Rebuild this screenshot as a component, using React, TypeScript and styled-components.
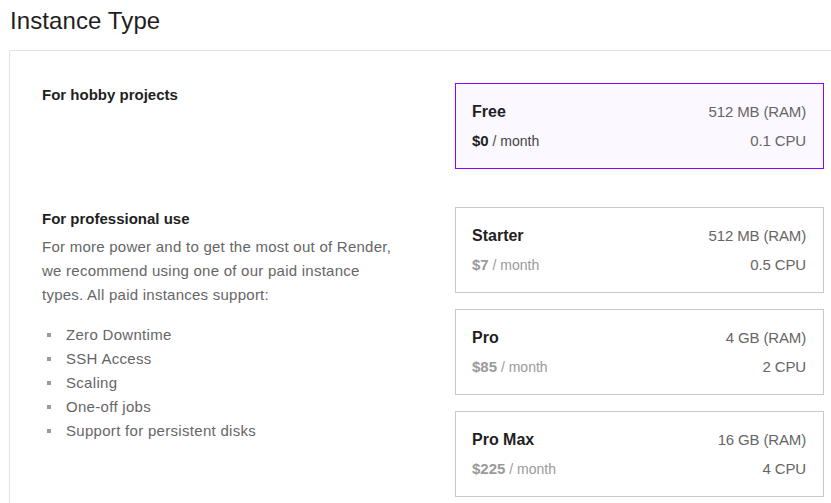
import React from "react";
import styled, { createGlobalStyle } from "styled-components";

const GlobalStyle = createGlobalStyle`
  html, body {
    margin: 0;
    padding: 0;
    background: #ffffff;
    overflow: hidden;
  }
  body {
    font-family: "Liberation Sans", Arial, sans-serif;
    color: #222222;
  }
`;

const Page = styled.div`
  padding: 5px 0 0 9px;
  width: 900px;
`;

const Title = styled.h1`
  margin: 0 0 13px 1px;
  font-size: 24px;
  line-height: 32px;
  font-weight: 400;
  letter-spacing: 0.1px;
  color: #1f1f1f;
`;

const Panel = styled.section`
  width: 846px;
  border: 1px solid #e2e2e2;
  padding: 32px;
  box-sizing: border-box;
  display: flex;
  flex-direction: column;
  gap: 38px;
`;

const Section = styled.div`
  display: grid;
  grid-template-columns: 369px 369px;
  column-gap: 44px;
  align-items: start;
`;

const Info = styled.div`
  display: flex;
  flex-direction: column;
`;

const SectionHeading = styled.h3`
  margin: 0;
  font-size: 15px;
  line-height: 24px;
  font-weight: 700;
  color: #1f1f1f;
`;

const Paragraph = styled.p`
  margin: 4px 0 0;
  max-width: 360px;
  font-size: 15px;
  line-height: 24px;
  letter-spacing: 0.25px;
  color: #666666;
`;

const List = styled.ul`
  margin: 16px 0 0;
  padding: 0;
  list-style: none;
`;

const Item = styled.li`
  display: flex;
  align-items: center;
  gap: 15px;
  font-size: 15px;
  line-height: 24px;
  letter-spacing: 0.3px;
  color: #666666;
  &::before {
    content: "";
    width: 4px;
    height: 4px;
    margin-left: 5px;
    background: #9a9a9a;
    flex: none;
  }
`;

const Cards = styled.div`
  display: flex;
  flex-direction: column;
  gap: 16px;
`;

const Card = styled.div<{ $selected?: boolean }>`
  box-sizing: border-box;
  height: 86px;
  padding: 16px 17px 15px 16px;
  border: 1px solid ${(p) => (p.$selected ? "#8a05ff" : "#c9c9c9")};
  background: ${(p) => (p.$selected ? "#fbf8ff" : "#ffffff")};
  display: grid;
  grid-template-columns: 1fr auto;
  row-gap: 5px;
  cursor: pointer;
`;

const CardName = styled.div`
  font-size: 16px;
  line-height: 24px;
  font-weight: 700;
  color: #1f1f1f;
`;

const Spec = styled.div`
  font-size: 15px;
  line-height: 24px;
  color: #666666;
  text-align: right;
  letter-spacing: -0.15px;
`;

const Price = styled.div<{ $selected?: boolean }>`
  font-size: 14px;
  line-height: 24px;
  color: ${(p) => (p.$selected ? "#444444" : "#9a9a9a")};
`;

const Amount = styled.strong<{ $selected?: boolean }>`
  font-size: 15px;
  font-weight: 700;
  color: ${(p) => (p.$selected ? "#1f1f1f" : "#9a9a9a")};
`;

type Plan = {
  name: string;
  price: string;
  ram: string;
  cpu: string;
  selected?: boolean;
};

const PlanCard = ({ plan }: { plan: Plan }) => (
  <Card $selected={plan.selected}>
    <CardName>{plan.name}</CardName>
    <Spec>{plan.ram}</Spec>
    <Price $selected={plan.selected}>
      <Amount $selected={plan.selected}>{plan.price}</Amount> / month
    </Price>
    <Spec>{plan.cpu}</Spec>
  </Card>
);

const paid: Plan[] = [
  { name: "Starter", price: "$7", ram: "512 MB (RAM)", cpu: "0.5 CPU" },
  { name: "Pro", price: "$85", ram: "4 GB (RAM)", cpu: "2 CPU" },
  { name: "Pro Max", price: "$225", ram: "16 GB (RAM)", cpu: "4 CPU" },
];

const features = [
  "Zero Downtime",
  "SSH Access",
  "Scaling",
  "One-off jobs",
  "Support for persistent disks",
];

export default function App() {
  return (
    <>
      <GlobalStyle />
      <Page>
        <Title>Instance Type</Title>
        <Panel>
          <Section>
            <Info>
              <SectionHeading>For hobby projects</SectionHeading>
            </Info>
            <Cards>
              <PlanCard
                plan={{
                  name: "Free",
                  price: "$0",
                  ram: "512 MB (RAM)",
                  cpu: "0.1 CPU",
                  selected: true,
                }}
              />
            </Cards>
          </Section>
          <Section>
            <Info>
              <SectionHeading>For professional use</SectionHeading>
              <Paragraph>
                For more power and to get the most out of Render, we recommend
                using one of our paid instance types. All paid instances
                support:
              </Paragraph>
              <List>
                {features.map((f) => (
                  <Item key={f}>{f}</Item>
                ))}
              </List>
            </Info>
            <Cards>
              {paid.map((p) => (
                <PlanCard key={p.name} plan={p} />
              ))}
            </Cards>
          </Section>
        </Panel>
      </Page>
    </>
  );
}
